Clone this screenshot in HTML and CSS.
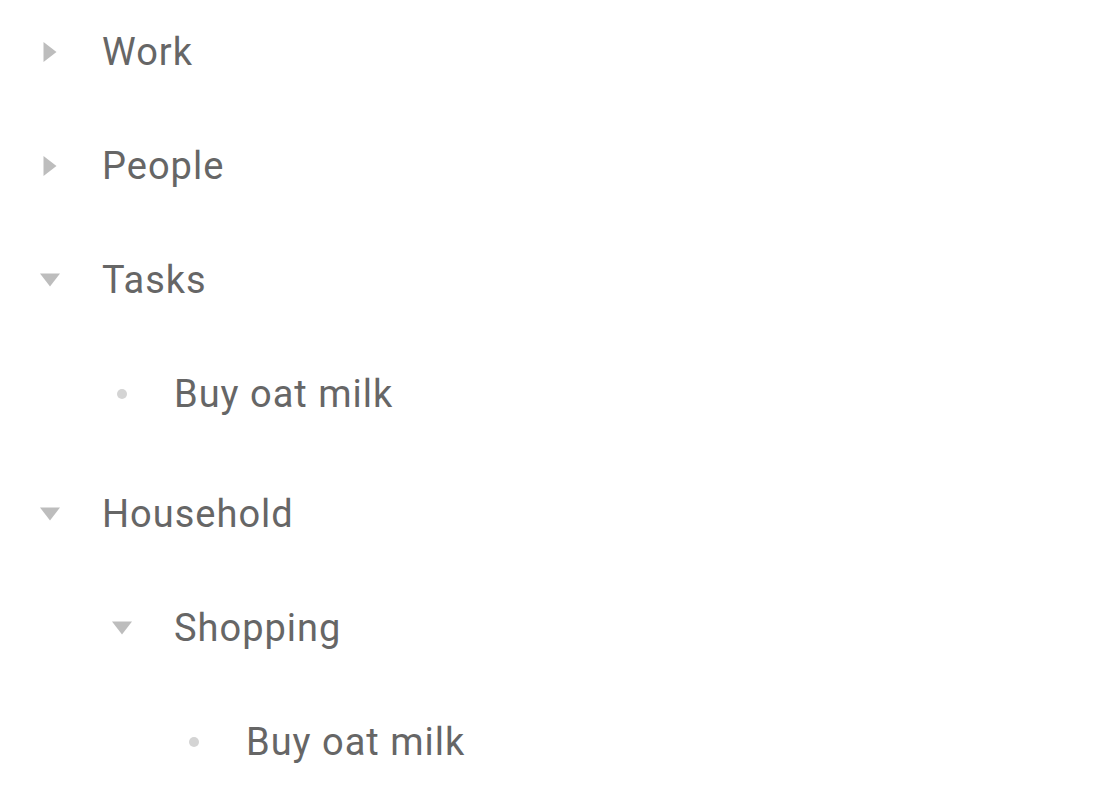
FILE: index.html
```html
<!DOCTYPE html>
<html lang="en">
<head>
    <meta charset="UTF-8">
    <meta name="viewport" content="width=device-width, initial-scale=1.0">
    <title>Outline</title>
    <link rel="stylesheet" href="styles.css">
</head>
<body>
    <div class="outline">
        <div class="row">
            <svg class="icon" viewBox="0 0 24 24"><polygon class="arrow" points="5.5,2 18.5,12 5.5,22"/></svg>
            <span class="label">Work</span>
        </div>
        <div class="row">
            <svg class="icon" viewBox="0 0 24 24"><polygon class="arrow" points="5.5,2 18.5,12 5.5,22"/></svg>
            <span class="label">People</span>
        </div>
        <div class="row">
            <svg class="icon" viewBox="0 0 24 24"><polygon class="arrow" points="2,5.5 22,5.5 12,18.5"/></svg>
            <span class="label">Tasks</span>
        </div>
        <div class="children">
            <div class="row">
                <svg class="icon" viewBox="0 0 24 24"><circle class="dot" cx="12" cy="12" r="5"/></svg>
                <span class="label">Buy oat milk</span>
            </div>
        </div>
        <div class="row">
            <svg class="icon" viewBox="0 0 24 24"><polygon class="arrow" points="2,5.5 22,5.5 12,18.5"/></svg>
            <span class="label">Household</span>
        </div>
        <div class="children">
            <div class="row">
                <svg class="icon" viewBox="0 0 24 24"><polygon class="arrow" points="2,5.5 22,5.5 12,18.5"/></svg>
                <span class="label">Shopping</span>
            </div>
            <div class="children">
                <div class="row">
                    <svg class="icon" viewBox="0 0 24 24"><circle class="dot" cx="12" cy="12" r="5"/></svg>
                    <span class="label">Buy oat milk</span>
                </div>
            </div>
        </div>
    </div>
</body>
</html>
```

FILE: styles.css
```css
body { margin: 0; background: #fff; font-family: Roboto, "Liberation Sans", sans-serif; }
.outline { display: flex; flex-direction: column; gap: 10px; padding-left: 38px; }
.children { display: flex; flex-direction: column; gap: 10px; padding-left: 72px; margin-bottom: 6px; }
.row { display: flex; align-items: center; height: 104px; gap: 40px; }
.icon { width: 24px; height: 24px; flex: none; }
.arrow { fill: #bdbdbd; }
.dot { fill: #d4d4d4; }
.label { font-size: 38px; color: #666; line-height: 1; letter-spacing: 1px; }
```
